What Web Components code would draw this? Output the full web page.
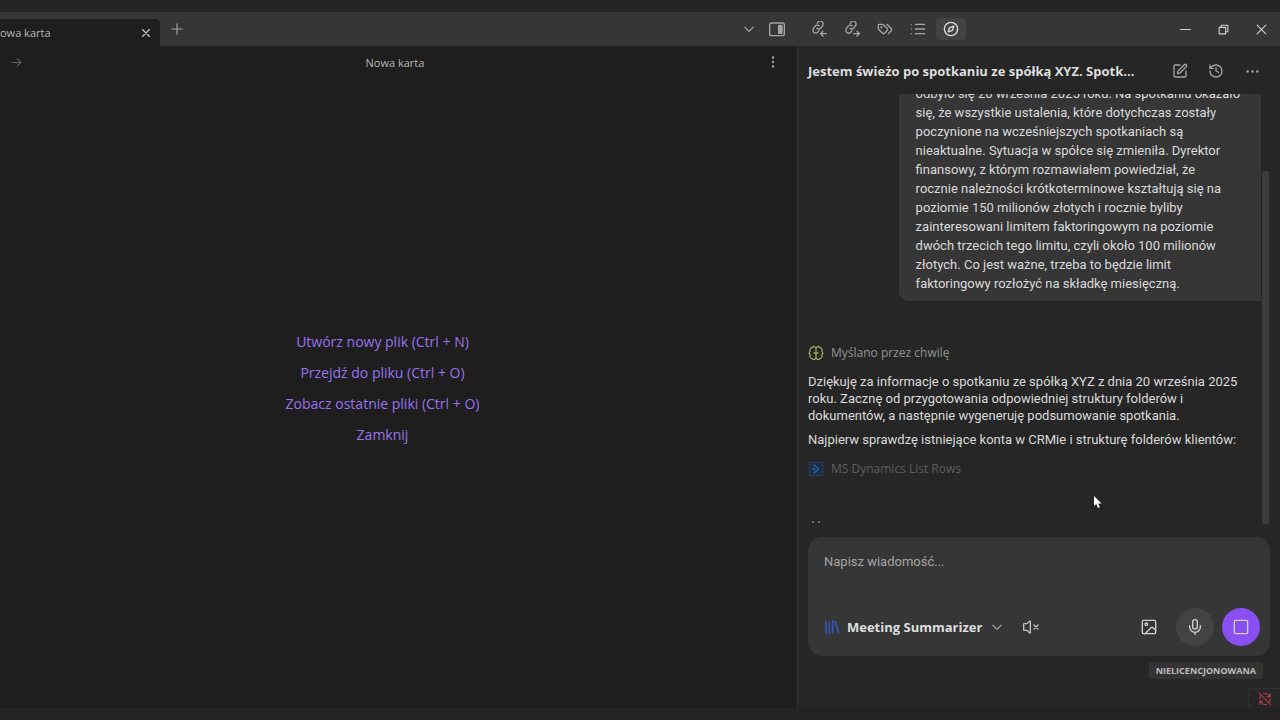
<!DOCTYPE html>
<html lang="pl">
<head>
<meta charset="utf-8">
<meta name="viewport" content="width=device-width, initial-scale=1">
<title>Nowa karta</title>
<style>
  html, body { margin: 0; height: 100%; }
  body {
    --bg-frame: #242424;
    --bg-bar: #363636;
    --bg-main: #1e1e1e;
    --bg-side: #262626;
    --bg-raised: #363636;
    --bg-hover: #434343;
    --line: #303030;
    --text: #dadada;
    --muted: #a4a4a4;
    --faint: #5e5e5e;
    --accent: #8a4ff0;
    --link: #9a72ee;
    --ui-font: "Open Sans", "Noto Sans", sans-serif;
    --message-font: Roboto, "Open Sans", sans-serif;
    background: var(--bg-frame);
    color: var(--text);
    font: 13px/17px var(--ui-font);
    overflow: hidden;
  }
</style>
</head>
<body>
<app-shell></app-shell>

<script>
const ICONS = {
  x: '<path d="M18 6 6 18M6 6l12 12"/>',
  xLarge: '<path d="M20 4 4 20M4 4l16 16"/>',
  plus: '<path d="M3 12h18M12 3v18"/>',
  forward: '<path d="M4 12h16M13 5l7 7-7 7"/>',
  chevron: '<path d="m5 9 7 7 7-7"/>',
  panel: '<rect x="1" y="3" width="22" height="19" rx="3"/><rect x="14.5" y="6.5" width="5" height="12" rx="1" fill="currentColor"/>',
  dotsV: '<g fill="currentColor" stroke="none"><circle cx="12" cy="3" r="2.4"/><circle cx="12" cy="12" r="2.4"/><circle cx="12" cy="21" r="2.4"/></g>',
  dotsH: '<g fill="currentColor" stroke="none"><circle cx="3" cy="12" r="2.2"/><circle cx="12" cy="12" r="2.2"/><circle cx="21" cy="12" r="2.2"/></g>',
  linkIn: '<g transform="rotate(-12 11 9)"><path d="M8.5 10.500a4.200 4.200 0 0 0 6.300.5l3-3a4.200 4.200 0 0 0-6-6L10.300 3.500"/><path d="M12.500 7.500a4.200 4.200 0 0 0-6.300-.5l-3 3a4.200 4.200 0 0 0 6 6l1.300-1.300"/></g><path d="M23 19h-8M18 15.500 14.500 19l3.500 3.500"/>',
  linkOut: '<g transform="rotate(-12 11 9)"><path d="M8.5 10.500a4.200 4.200 0 0 0 6.300.5l3-3a4.200 4.200 0 0 0-6-6L10.300 3.500"/><path d="M12.500 7.500a4.200 4.200 0 0 0-6.300-.5l-3 3a4.200 4.200 0 0 0 6 6l1.300-1.300"/></g><path d="M14.500 19h8M19.500 15.500 23 19l-3.500 3.500"/>',
  tags: '<path d="m15 5 6.300 6.300a2.400 2.400 0 0 1 0 3.400L17 19"/><path d="M9.600 5.600A2 2 0 0 0 8.200 5H3a1 1 0 0 0-1 1v5.200a2 2 0 0 0 .6 1.400l5.500 5.500a2.400 2.400 0 0 0 3.400 0l3.700-3.700a2.400 2.400 0 0 0 0-3.400z"/><circle cx="6.500" cy="9.500" r=".7" fill="currentColor"/>',
  list: '<path d="M8 5h14M8 12h14M8 19h14M2 5h.01M2 12h.01M2 19h.01"/>',
  compass: '<circle cx="12" cy="12" r="10"/><path d="m16.240 7.760-1.800 5.410a2 2 0 0 1-1.270 1.270L7.760 16.240l1.800-5.410a2 2 0 0 1 1.270-1.270z"/>',
  minimize: '<path d="M3 12h18"/>',
  restore: '<rect x="4" y="8" width="12" height="12"/><path d="M8 8V4h12v12h-4"/>',
  edit: '<path d="M12 3H5a2 2 0 0 0-2 2v14a2 2 0 0 0 2 2h14a2 2 0 0 0 2-2v-7"/><path d="M18.400 2.600a2.100 2.100 0 0 1 3 3l-9 9a2 2 0 0 1-.9.5l-2.800.8a.5.5 0 0 1-.6-.6l.8-2.800a2 2 0 0 1 .5-.9z"/>',
  history: '<path d="M3 12a9 9 0 1 0 9-9 9.750 9.750 0 0 0-6.740 2.740L3 8"/><path d="M3 3v5h5M12 7v5l4 2"/>',
  brain: '<path d="M12 5v14M12 5a3.200 3.200 0 0 0-6-1 4 4 0 0 0-2.800 5.200A4.200 4.200 0 0 0 3.200 15a4 4 0 0 0 3 5.300A3.200 3.200 0 0 0 12 19M12 5a3.200 3.200 0 0 1 6-1 4 4 0 0 1 2.800 5.200 4.200 4.200 0 0 1 0 5.800 4 4 0 0 1-3 5.300A3.200 3.200 0 0 1 12 19"/><path d="M9 12h6"/>',
  dynamics: '<rect x="2" y="2" width="20" height="20" rx="2" fill="#1b3048" stroke="#203f60" stroke-dasharray="3 2"/><path d="m9 6 7 6-7 6M7 12h3" stroke="#30669f"/>',
  library: '<path stroke-width="2.6" d="M3 3v18M8 5v16M13 3v18M17 4l5 17"/>',
  mute: '<path d="M11 3.700a.7.7 0 0 0-1.200-.5L6.400 6.600A1.400 1.400 0 0 1 5.400 7H2a1 1 0 0 0-1 1v8a1 1 0 0 0 1 1h3.400a1.400 1.400 0 0 1 1 .4l3.400 3.400a.7.7 0 0 0 1.200-.5zM22.500 9l-6 6M16.500 9l6 6"/>',
  image: '<rect x="2" y="2" width="20" height="20" rx="2"/><circle cx="8" cy="8" r="2"/><path d="m6 22 9-9a2 2 0 0 1 3 0l4 4"/>',
  mic: '<rect x="8.500" y="1" width="7" height="14" rx="3.500"/><path d="M20 10v2a8 8 0 0 1-16 0v-2M12 20v3"/>',
  stop: '<rect x="2" y="2" width="20" height="20" rx="2"/>',
  syncOff: '<path d="M21 8 18.700 5.700A9.500 9.500 0 0 0 9 3M21 3v5h-5M3 16l2.300 2.300A9.500 9.500 0 0 0 15 21M8 16H3v5M3 12a9 9 0 0 1 2-5.500M21 12a9 9 0 0 1-2 5.500M2 2l20 20"/>'
};

function define(name, markup, setup) {
  const template = document.createElement('template');
  template.innerHTML = `<style>:host,*{box-sizing:border-box}</style>${markup}`;
  customElements.define(name, class extends HTMLElement {
    constructor() {
      super();
      this.attachShadow({ mode: 'open' }).append(template.content.cloneNode(true));
    }
    connectedCallback() { if (setup) setup(this, this.shadowRoot); }
  });
}

define('app-icon', `
  <style>
    :host { display: block; flex: none; width: var(--icon, 16px); height: var(--icon, 16px); }
    svg { display: block; width: 100%; height: 100%; fill: none; stroke: currentColor; stroke-width: 2; stroke-linecap: round; stroke-linejoin: round; }
  </style>
  <svg viewBox="0 0 24 24" aria-hidden="true"></svg>`,
  (el, root) => { root.querySelector('svg').innerHTML = ICONS[el.getAttribute('name')]; });

define('icon-button', `
  <style>
    :host { display: block; flex: none; color: var(--muted); }
    button { display: grid; place-items: center; width: var(--w, 30px); height: var(--h, 22px); padding: 0; border: 0; border-radius: var(--r, 4px); background: var(--fill, none); color: inherit; }
    :host([active]) { color: var(--text); --fill: var(--bg-hover); }
  </style>
  <button type="button"></button>`,
  (el, root) => {
    const button = root.querySelector('button');
    button.innerHTML = `<app-icon name="${el.getAttribute('icon')}"></app-icon>`;
    button.setAttribute('aria-label', el.getAttribute('label'));
  });

define('tab-bar', `
  <style>
    :host { display: flex; align-items: center; height: 34px; background: var(--bg-bar); padding-right: 6px; }
    .tab { align-self: flex-end; display: flex; align-items: center; justify-content: space-between; width: 160px; height: 27px; background: var(--bg-main); border-top-right-radius: 5px; color: #b8b8b8; font-size: 11px; }
    .tab icon-button { --w: 28px; --icon: 14px; color: #c4c4c4; }
    .add { --w: 34px; --icon: 14px; flex: 1; }
    .menu { --w: 28px; --icon: 14px; }
    .panel { --w: 28px; }
  </style>
  <div class="tab"><span>owa karta</span><icon-button icon="x" label="Zamknij kartę"></icon-button></div>
  <icon-button class="add" icon="plus" label="Nowa karta"></icon-button>
  <icon-button class="menu" icon="chevron" label="Lista kart"></icon-button>
  <icon-button class="panel" icon="panel" label="Panel boczny"></icon-button>`);

define('side-bar', `
  <style>
    :host { display: flex; align-items: center; justify-content: space-between; height: 34px; padding-left: 6px; background: var(--bg-bar); }
    div { display: flex; gap: 3px; }
    .window { gap: 0; }
    .window icon-button { --w: 38px; --icon: 13px; color: #cfcfcf; }
  </style>
  <div>
    <icon-button icon="linkIn" label="Linki przychodzące"></icon-button>
    <icon-button icon="linkOut" label="Linki wychodzące"></icon-button>
    <icon-button icon="tags" label="Tagi"></icon-button>
    <icon-button icon="list" label="Konspekt"></icon-button>
    <icon-button icon="compass" label="Asystent" active></icon-button>
  </div>
  <div class="window">
    <icon-button icon="minimize" label="Minimalizuj"></icon-button>
    <icon-button icon="restore" label="Przywróć"></icon-button>
    <icon-button icon="xLarge" label="Zamknij"></icon-button>
  </div>`);

define('view-header', `
  <style>
    :host { display: flex; align-items: center; height: 32px; padding-right: 9px; font-size: 11px; color: #b8b8b8; }
    span { flex: 1; text-align: center; }
    .next { --w: 32px; --icon: 13px; color: var(--faint); }
    .more { --icon: 12px; }
  </style>
  <icon-button class="next" icon="forward" label="Dalej"></icon-button>
  <span>Nowa karta</span>
  <icon-button class="more" icon="dotsV" label="Więcej"></icon-button>`);

define('empty-view', `
  <style>
    :host { flex: 1; display: flex; flex-direction: column; align-items: center; justify-content: center; gap: 14px; padding: 0 32px 10px 0; font-size: 14px; }
    a { color: var(--link); text-decoration: none; }
  </style>
  <a href="#new">Utwórz nowy plik (Ctrl + N)</a>
  <a href="#open">Przejdź do pliku (Ctrl + O)</a>
  <a href="#recent">Zobacz ostatnie pliki (Ctrl + O)</a>
  <a href="#close">Zamknij</a>`);

define('chat-header', `
  <style>
    :host { display: flex; align-items: center; height: 48px; padding: 2px 10px 0; }
    h1 { flex: 1; margin: 0; font-size: 13px; font-weight: 700; white-space: nowrap; color: #dedede; }
    icon-button { --w: 36px; }
    .more { --icon: 13px; }
  </style>
  <h1>Jestem świeżo po spotkaniu ze spółką XYZ. Spotk...</h1>
  <icon-button icon="edit" label="Nowa rozmowa"></icon-button>
  <icon-button icon="history" label="Historia"></icon-button>
  <icon-button class="more" icon="dotsH" label="Więcej"></icon-button>`);

define('user-message', `
  <style>
    :host { display: block; align-self: flex-end; width: 80%; padding: 8px 0 8px 17px; border-bottom-left-radius: 9px; background: var(--bg-raised); font-family: var(--message-font); line-height: 19px; white-space: nowrap; }
  </style>
  <slot></slot>`);

define('step-row', `
  <style>
    :host { display: flex; align-items: center; gap: 7px; color: #929292; font-size: 12px; }
    :host([pending]) { color: var(--faint); }
  </style>
  <slot name="icon"></slot><span><slot></slot></span>`);

define('chat-log', `
  <style>
    :host { flex: 1; min-height: 0; display: flex; margin: 0 10px; }
    .log { flex: 1; min-width: 0; display: flex; flex-direction: column; justify-content: flex-end; overflow: hidden; }
    .log > * { flex: none; }
    .track { flex: none; width: 9px; display: flex; flex-direction: column; justify-content: flex-end; padding: 0 1px 1px; }
    .thumb { height: 82%; background: #3d3d3d; border-radius: 2px; }
    .thought { margin: 43px 0 12px; }
    .tool { margin-top: 12px; }
    p { margin: 0; font-family: var(--message-font); white-space: nowrap; }
    p + p { margin-top: 7px; }
    .typing { display: flex; gap: 4px; height: 4px; margin: 44px 0 0 4px; }
    .typing i { width: 2px; height: 2px; border-radius: 1px; background: #808080; }
  </style>
  <div class="log">
    <user-message>odbyło się 20 września 2025 roku. Na spotkaniu okazało<br>się, że wszystkie ustalenia, które dotychczas zostały<br>poczynione na wcześniejszych spotkaniach są<br>nieaktualne. Sytuacja w spółce się zmieniła. Dyrektor<br>finansowy, z którym rozmawiałem powiedział, że<br>rocznie należności krótkoterminowe kształtują się na<br>poziomie 150 milionów złotych i rocznie byliby<br>zainteresowani limitem faktoringowym na poziomie<br>dwóch trzecich tego limitu, czyli około 100 milionów<br>złotych. Co jest ważne, trzeba to będzie limit<br>faktoringowy rozłożyć na składkę miesięczną.</user-message>
    <step-row class="thought"><app-icon slot="icon" name="brain" style="color:#97a555"></app-icon>Myślano przez chwilę</step-row>
    <p>Dziękuję za informacje o spotkaniu ze spółką XYZ z dnia 20 września 2025<br>roku. Zacznę od przygotowania odpowiedniej struktury folderów i<br>dokumentów, a następnie wygeneruję podsumowanie spotkania.</p>
    <p>Najpierw sprawdzę istniejące konta w CRMie i strukturę folderów klientów:</p>
    <step-row class="tool" pending><app-icon slot="icon" name="dynamics"></app-icon>MS Dynamics List Rows</step-row>
    <div class="typing"><i></i><i></i></div>
  </div>
  <div class="track"><div class="thumb"></div></div>`);

define('chat-composer', `
  <style>
    :host { display: block; margin: 12px 10px 0; padding: 16px 10px 10px 16px; border-radius: 14px; background: var(--bg-raised); }
    textarea { display: block; width: 100%; height: 55px; padding: 0; border: 0; outline: 0; resize: none; background: none; color: var(--text); font: inherit; font-family: var(--message-font); }
    textarea::placeholder { color: #a4a4a4; opacity: 1; }
    .row { display: flex; align-items: center; height: 38px; }
    .agent { display: flex; flex: 1; align-items: center; gap: 12px; }
    label { display: flex; align-items: center; gap: 7px; }
    label .books { color: #3458b4; }
    label .open { --icon: 14px; color: var(--muted); }
    select { appearance: none; margin: 0; padding: 0; border: 0; background: none; color: #dedede; font: inherit; font-weight: 700; }
    .agent icon-button { color: #c4c4c4; }
    .tools { display: flex; align-items: center; gap: 8px; }
    .tools icon-button { color: #d0d0d0; --h: 38px; --w: 38px; --r: 50%; }
  </style>
  <textarea aria-label="Wiadomość" placeholder="Napisz wiadomość..."></textarea>
  <div class="row">
    <div class="agent">
      <label><app-icon class="books" name="library"></app-icon><select aria-label="Agent"><option>Meeting Summarizer</option></select><app-icon class="open" name="chevron"></app-icon></label>
      <icon-button icon="mute" label="Wycisz"></icon-button>
    </div>
    <div class="tools">
      <icon-button icon="image" label="Dodaj obraz"></icon-button>
      <icon-button icon="mic" label="Dyktuj" style="--fill:#434343"></icon-button>
      <icon-button icon="stop" label="Zatrzymaj" style="--fill:var(--accent)"></icon-button>
    </div>
  </div>`);

define('side-footer', `
  <style>
    :host { display: flex; flex-direction: column; align-items: flex-end; justify-content: space-between; height: 52px; padding-top: 6px; }
    .badge { margin-right: 17px; padding: 0 7px; border-radius: 3px; background: #343434; color: #bcbcbc; font-size: 9px; font-weight: 700; }
    .sync { display: grid; place-items: center; width: 32px; height: 20px; border: solid var(--line); border-width: 1px 0 0 1px; border-top-left-radius: 4px; color: #b8384c; --icon: 14px; }
  </style>
  <span class="badge">NIELICENCJONOWANA</span>
  <div class="sync" role="status" aria-label="Synchronizacja wyłączona"><app-icon name="syncOff"></app-icon></div>`);

define('mouse-pointer', `
  <style>
    :host { position: absolute; left: 295px; top: 483px; width: 10px; height: 14px; }
    svg { display: block; }
  </style>
  <svg width="10" height="14" viewBox="0 0 10 14" aria-hidden="true"><path d="M1 1v10l2.300-2 1.700 4 1.800-.8L5.200 8.400H8.500z" fill="#fff"/></svg>`);

define('app-shell', `
  <style>
    :host { display: grid; grid-template-columns: minmax(0, 797fr) minmax(0, 483fr); height: 100vh; padding: 12px 0; overflow: hidden; }
    main, aside { display: flex; flex-direction: column; min-height: 0; }
    main { background: var(--bg-main); }
    aside { position: relative; border-left: 1px solid var(--line); background: var(--bg-side); }
  </style>
  <main>
    <tab-bar></tab-bar>
    <view-header></view-header>
    <empty-view></empty-view>
  </main>
  <aside>
    <side-bar></side-bar>
    <chat-header></chat-header>
    <chat-log></chat-log>
    <chat-composer></chat-composer>
    <side-footer></side-footer>
    <mouse-pointer></mouse-pointer>
  </aside>`);
</script>
</body>
</html>
